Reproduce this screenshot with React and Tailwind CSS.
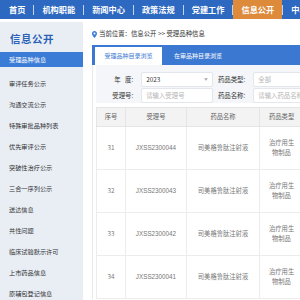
import React from 'react';

const navItems = ['首页', '机构职能', '新闻中心', '政策法规', '党建工作', '信息公开', '中心'];

const sideItems = [
  '审评任务公示',
  '沟通交流公示',
  '特殊审批品种列表',
  '优先审评公示',
  '突破性治疗公示',
  '三合一序列公示',
  '送达信息',
  '共性问题',
  '临床试验默示许可',
  '上市药品信息',
  '原辅包登记信息',
];

const rows = [
  { no: 31, code: 'JXSS2300044' },
  { no: 32, code: 'JXSS2300043' },
  { no: 33, code: 'JXSS2300042' },
  { no: 34, code: 'JXSS2300041' },
];

const cjk = { fontFamily: '"Noto Sans CJK SC", "Liberation Sans", sans-serif' };
const song = { fontFamily: '"Liberation Serif", "Noto Sans CJK SC", serif' };

const App = () => {
  return (
    <div className="w-[300px] h-[300px] overflow-hidden bg-white" style={cjk}>
      {/* top nav */}
      <nav className="h-[19px] bg-[#2d68c1] flex items-center text-white font-bold text-[8.2px] whitespace-nowrap">
        {navItems.map((item, i) => (
          <React.Fragment key={item}>
            {i > 0 && <span className="w-px h-[10px] bg-white/70 shrink-0" />}
            <span
              className={`h-full flex items-center shrink-0 ${
                item === '信息公开' ? 'bg-[#de8a3b] px-[8px]' : i === 0 ? 'pl-[9px] pr-[8px]' : 'px-[8px]'
              }`}
            >
              {item}
            </span>
          </React.Fragment>
        ))}
      </nav>

      <div className="flex mt-[3px]">
        {/* sidebar */}
        <aside className="w-[83px] shrink-0 h-[278px] bg-[#e9eef5]">
          <div className="h-[30px] flex items-center pl-[10px] pt-[4px] text-[10.5px] font-bold text-[#2a62b8] tracking-[0.5px]">
            信息公开
          </div>
          <div className="h-[15px] bg-[#3b7cd6] text-white text-[6.2px] flex items-center pl-[9px]" style={song}>
            受理品种信息
          </div>
          <ul className="pt-[6px]" style={song}>
            {sideItems.map((s) => (
              <li key={s} className="h-[21px] flex items-center pl-[9px] text-[6.2px] text-[#333]">
                {s}
              </li>
            ))}
          </ul>
        </aside>

        {/* main */}
        <main className="w-[208px] shrink-0 ml-[9px]">
          <div className="h-[20px] flex items-center gap-[2px] text-[6.4px] text-[#333] whitespace-nowrap pt-[4px]">
            <svg width="5" height="7" viewBox="0 0 10 14" className="shrink-0">
              <path d="M5 0C2.2 0 0 2.2 0 5c0 3.8 5 9 5 9s5-5.2 5-9c0-2.8-2.2-5-5-5zm0 7a2 2 0 110-4 2 2 0 010 4z" fill="#3b7cd6" />
            </svg>
            <span>当前位置：信息公开 &gt;&gt; 受理品种信息</span>
          </div>

          <div className="mt-[3px] w-[230px] h-[20px] bg-[#3b78d1] flex items-end pl-[3px] text-[6px] whitespace-nowrap" style={song}>
            <div className="w-[67px] h-[18px] bg-white text-[#3b78d1] flex items-center justify-center">受理品种目录浏览</div>
            <div className="w-[68px] h-[18px] text-white flex items-center justify-center ml-[2px]">在审品种目录浏览</div>
          </div>

          <div className="border-l border-[#e6e9ee] w-[230px] pl-[3px]">
            <div className="bg-[#f4f6f9] h-[38px] pt-[7px] text-[6.4px] text-[#333] flex flex-col gap-[1px]">
              <div className="flex items-center h-[15px]">
                <span className="w-[38px] text-right">年&nbsp;&nbsp;&nbsp;度:</span>
                <div className="ml-[8px] w-[73px] h-[15px] bg-white border border-[#e3e6eb] rounded-[2px] flex items-center justify-between px-[4px]">
                  <span>2023</span>
                  <svg width="4" height="3" viewBox="0 0 8 5"><path d="M0 0h8L4 5z" fill="#aaa" /></svg>
                </div>
                <span className="ml-[5px] w-[30px]">药品类型:</span>
                <div className="ml-[6px] w-[70px] h-[15px] bg-white border border-[#e3e6eb] rounded-[2px] flex items-center px-[4px] text-[#b5b5b5]">
                  全部
                </div>
              </div>
              <div className="flex items-center h-[15px]">
                <span className="w-[38px] text-right">受理号:</span>
                <div className="ml-[8px] w-[73px] h-[15px] bg-white border border-[#e3e6eb] rounded-[2px] flex items-center px-[4px] text-[#b5b5b5]">
                  请输入受理号
                </div>
                <span className="ml-[5px] w-[30px]">药品名称:</span>
                <div className="ml-[6px] w-[70px] h-[15px] bg-white border border-[#e3e6eb] rounded-[2px] flex items-center px-[4px] text-[#b5b5b5] whitespace-nowrap overflow-hidden">
                  请输入药品名称
                </div>
              </div>
            </div>

            <table className="mt-[4px] border-collapse text-[6.3px] text-[#777] text-center table-fixed w-[230px]">
              <colgroup>
                <col className="w-[29px]" />
                <col className="w-[61px]" />
                <col className="w-[73px]" />
                <col className="w-[67px]" />
              </colgroup>
              <thead>
                <tr className="h-[19px] bg-[#f3f3f3] text-[#666]">
                  <th className="font-normal border border-[#e5e5e5]">序号</th>
                  <th className="font-normal border border-[#e5e5e5]">受理号</th>
                  <th className="font-normal border border-[#e5e5e5]">药品名称</th>
                  <th className="font-normal border border-[#e5e5e5] text-left pl-[9px]">药品类型</th>
                </tr>
              </thead>
              <tbody>
                {rows.map((r) => (
                  <tr key={r.no} className="h-[43px]">
                    <td className="border border-[#ececec]">{r.no}</td>
                    <td className="border border-[#ececec]" style={{ fontFamily: '"Liberation Sans", sans-serif' }}>{r.code}</td>
                    <td className="border border-[#ececec]">司美格鲁肽注射液</td>
                    <td className="border border-[#ececec] text-left pl-[9px] leading-[10px]">
                      治疗用生
                      <br />
                      <span className="pl-[3px]">物制品</span>
                    </td>
                  </tr>
                ))}
              </tbody>
            </table>
          </div>
        </main>
      </div>
    </div>
  );
};

export default App;
